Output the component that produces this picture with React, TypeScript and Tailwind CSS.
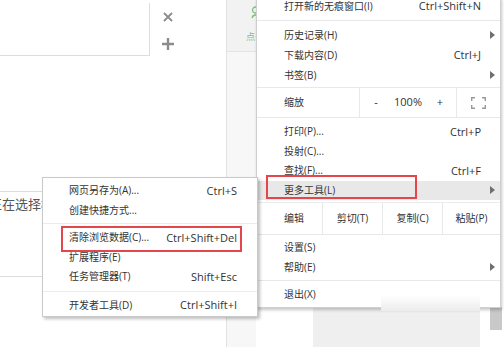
import React from 'react';

type ItemProps = {
  label: string;
  shortcut?: string;
  arrow?: boolean;
  active?: boolean;
  height?: string;
};

const Arrow = () => (
  <svg className="absolute right-[5px] top-1/2 -translate-y-1/2" width="5" height="8" viewBox="0 0 5 8">
    <path d="M0 0 L5 4 L0 8 Z" fill="#6f6f6f" />
  </svg>
);

const MainItem = ({ label, shortcut, arrow, active, height = 'h-[19.5px]' }: ItemProps) => (
  <div className={`relative flex items-center pl-[27px] pr-[19px] ${height} ${active ? 'bg-[#e8e8e8]' : ''}`}>
    <span className="text-[10px] text-[#333]">{label}</span>
    {shortcut && <span className="ml-auto text-[11px] text-[#333]">{shortcut}</span>}
    {arrow && <Arrow />}
  </div>
);

const SubItem = ({ label, shortcut }: ItemProps) => (
  <div className="flex items-center h-[19.5px] pl-[26px] pr-[20px]">
    <span className="text-[10px] text-[#333]">{label}</span>
    {shortcut && <span className="ml-auto text-[11px] text-[#333]">{shortcut}</span>}
  </div>
);

const FullscreenIcon = () => (
  <svg width="15" height="12" viewBox="0 0 15 12" fill="none" stroke="#9a9a9a" strokeWidth="1.4">
    <path d="M0.7 4 V0.7 H4" />
    <path d="M11 0.7 H14.3 V4" />
    <path d="M0.7 8 V11.3 H4" />
    <path d="M11 11.3 H14.3 V8" />
  </svg>
);

export default function App() {
  return (
    <div className="relative w-[504px] h-[347px] overflow-hidden bg-white flex font-['Open_Sans','Noto_Sans_CJK_SC',sans-serif]">
      {/* page behind the menus */}
      <div className="w-[226px] flex flex-col">
        <div className="h-[56px] flex">
          <div className="mt-[3px] w-[150px] h-[53px] border-r border-b border-[#dddddd]" />
          <div className="w-[36px] flex flex-col items-center pt-[12px] gap-[16px]">
            <svg width="10" height="10" viewBox="0 0 10 10" stroke="#8c8c8c" strokeWidth="1.8">
              <path d="M1 1 L9 9 M9 1 L1 9" />
            </svg>
            <svg width="12" height="12" viewBox="0 0 12 12" stroke="#8c8c8c" strokeWidth="2.4">
              <path d="M6 0 V12 M0 6 H12" />
            </svg>
          </div>
        </div>
        <div className="mt-[135px] border-t border-[#dddddd]" />
        <div className="h-[26px] flex items-center overflow-hidden">
          <span className="-ml-[11px] text-[13px] text-[#555] whitespace-nowrap">正在选择框</span>
        </div>
        <div className="mt-[58px] border-t border-[#dddddd]" />
      </div>

      <div className="w-[30px] border-l border-[#e2e2e2] bg-[#f7f7f7] flex flex-col">
        <div className="h-[52px] bg-[#f2f2f2] border-b border-[#e4e4e4] flex flex-col items-end overflow-hidden">
          <svg className="mt-[6px] -mr-[4px]" width="9" height="13" viewBox="0 0 9 13" fill="none" stroke="#7cc47c" strokeWidth="1.3">
            <circle cx="4.5" cy="4" r="3" />
            <path d="M1 12 C2 8 7 8 8 12" />
          </svg>
          <span className="mt-[13px] -mr-[8px] text-[9px] leading-none text-[#7cc47c] whitespace-nowrap">点击</span>
        </div>
      </div>

      <div className="flex-1 flex flex-col">
        <div className="flex-1" />
        <div className="h-[40px] flex">
          <div className="ml-[57px] w-[167px] bg-[#efefef]" />
          <div className="ml-[10px] w-[12px] h-[23px] bg-[#c9c9c9]" />
        </div>
      </div>

      {/* main browser menu */}
      <div className="absolute z-10 left-[256px] top-[-3px] w-[245px] bg-white border-l border-r border-b border-[#cfcfcf] shadow-[1px_2px_3px_rgba(0,0,0,0.22)]">
        <MainItem label="打开新的无痕窗口(I)" shortcut="Ctrl+Shift+N" height="h-[19px]" />
        <div className="mt-[4px] mb-[4px] border-t border-[#e8e8e8]" />
        <MainItem label="历史记录(H)" arrow height="h-[20px]" />
        <MainItem label="下载内容(D)" shortcut="Ctrl+J" height="h-[20px]" />
        <MainItem label="书签(B)" arrow height="h-[20px]" />
        <div className="mt-[2px] border-t border-[#e8e8e8]" />
        <div className="h-[29px] flex">
          <div className="w-[102px] pl-[27px] flex items-center text-[10px] text-[#333]">缩放</div>
          <div className="w-[97px] border-l border-[#e8e8e8] grid grid-cols-[32px_32px_32px] items-center text-[11px] text-[#333]">
            <span className="text-center">-</span>
            <span className="text-center">100%</span>
            <span className="text-center">+</span>
          </div>
          <div className="flex-1 border-l border-[#e8e8e8] flex items-center justify-center">
            <FullscreenIcon />
          </div>
        </div>
        <div className="mb-[4px] border-t border-[#e8e8e8]" />
        <MainItem label="打印(P)..." shortcut="Ctrl+P" />
        <MainItem label="投射(C)..." />
        <MainItem label="查找(F)..." shortcut="Ctrl+F" />
        <MainItem label="更多工具(L)" arrow active />
        <div className="mt-[2px] border-t border-[#ececec]" />
        <div className="h-[31px] flex text-[10px] text-[#333]">
          <div className="w-[65px] pl-[27px] flex items-center">编辑</div>
          <div className="w-[60px] border-l border-[#e8e8e8] flex items-center justify-center">剪切(T)</div>
          <div className="w-[60px] border-l border-[#e8e8e8] flex items-center justify-center">复制(C)</div>
          <div className="flex-1 border-l border-[#e8e8e8] flex items-center justify-center">粘贴(P)</div>
        </div>
        <div className="mb-[3px] border-t border-[#e8e8e8]" />
        <MainItem label="设置(S)" />
        <MainItem label="帮助(E)" arrow />
        <div className="mt-[3px] mb-[4px] border-t border-[#e8e8e8]" />
        <MainItem label="退出(X)" height="h-[19px]" />
        <div className="h-[3px]" />
        <div className="absolute left-[9px] top-[178px] w-[151px] h-[24px] border-2 border-[#e4464b]" />
      </div>

      {/* 更多工具 submenu */}
      <div className="absolute z-20 left-[42px] top-[177px] w-[216px] bg-white border border-[#c9c9c9] shadow-[2px_2px_3px_rgba(0,0,0,0.25)] pt-[3px] pb-[1px]">
        <SubItem label="网页另存为(A)..." shortcut="Ctrl+S" />
        <SubItem label="创建快捷方式..." />
        <div className="mt-[3px] mb-[4px] border-t border-[#ececec]" />
        <SubItem label="清除浏览数据(C)..." shortcut="Ctrl+Shift+Del" />
        <SubItem label="扩展程序(E)" />
        <SubItem label="任务管理器(T)" shortcut="Shift+Esc" />
        <div className="mt-[4px] mb-[4px] border-t border-[#ececec]" />
        <SubItem label="开发者工具(D)" shortcut="Ctrl+Shift+I" />
        <div className="absolute left-[18px] top-[48px] w-[181px] h-[26px] border-2 border-[#e4464b]" />
      </div>

      {/* faded overlay at the bottom right */}
      <div className="absolute z-30 left-[381px] top-[295px] w-[99px] h-[16px] bg-gradient-to-b from-white to-[#ececec]" />
    </div>
  );
}
